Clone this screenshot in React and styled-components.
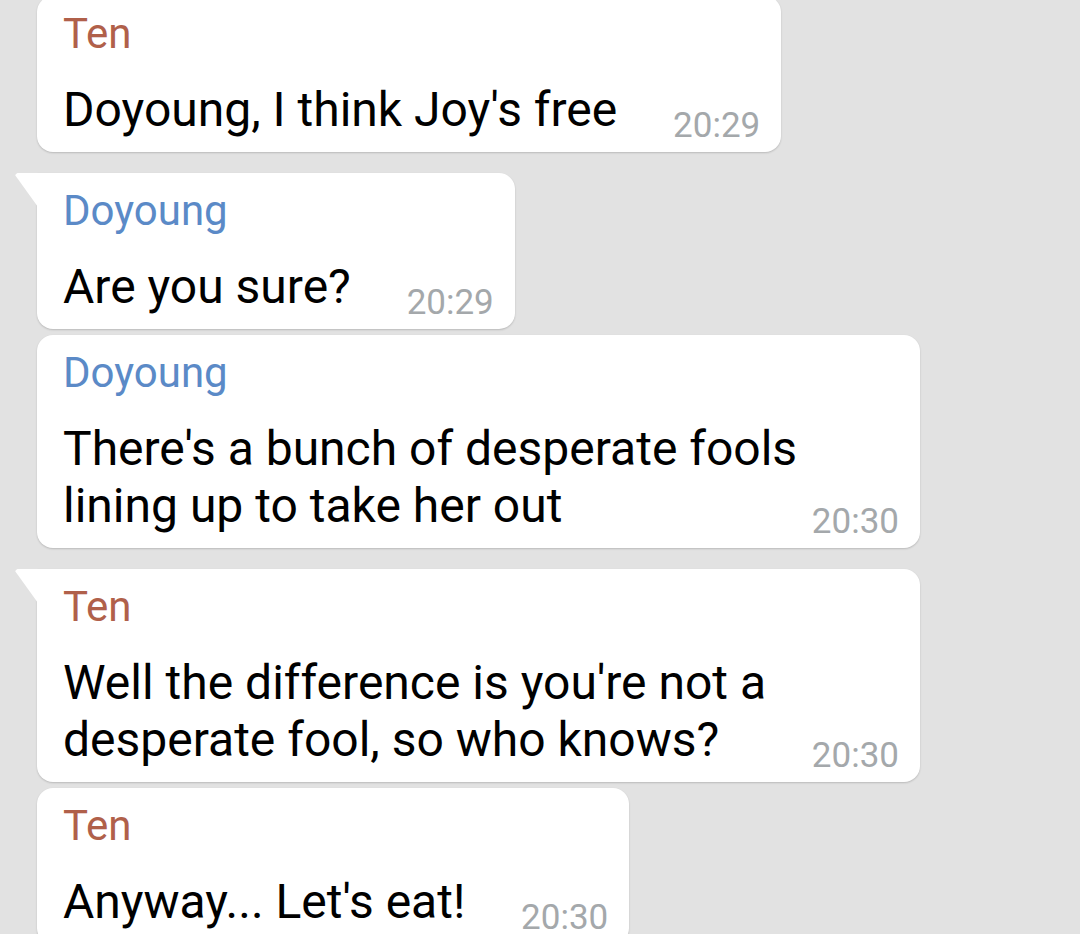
import React from 'react';
import styled, { createGlobalStyle, css } from 'styled-components';

const GlobalStyle = createGlobalStyle`
  html, body {
    margin: 0;
    padding: 0;
    background: #e2e2e2;
    font-family: Roboto, "Noto Sans", Arial, sans-serif;
    -webkit-font-smoothing: antialiased;
  }
`;

const messages = [
  { id: 1, from: 'Ten', text: "Doyoung, I think Joy's free", time: '20:29', first: false },
  { id: 2, from: 'Doyoung', text: 'Are you sure?', time: '20:29', first: true },
  { id: 3, from: 'Doyoung', text: "There's a bunch of desperate fools lining up to take her out", time: '20:30', first: false },
  { id: 4, from: 'Ten', text: "Well the difference is you're not a desperate fool, so who knows?", time: '20:30', first: true },
  { id: 5, from: 'Ten', text: "Anyway... Let's eat!", time: '20:30', first: false },
];

const nameColors = {
  Ten: '#b0604a',
  Doyoung: '#5b8ac7',
};

const App = () => {
  return (
    <React.Fragment>
      <GlobalStyle />
      <ChatList>
        {messages.map((m, i) => (
          <Bubble key={m.id} $tail={m.first} $gap={i === 0 ? -4 : m.first ? 21 : 6}>
            <Sender $color={nameColors[m.from]}>{m.from}</Sender>
            <Body>
              <Text>
                {m.text}
                <Spacer />
              </Text>
              <Time>{m.time}</Time>
            </Body>
          </Bubble>
        ))}
      </ChatList>
    </React.Fragment>
  );
};

export default App;

const ChatList = styled.div`
  width: 1080px;
  height: 934px;
  overflow: hidden;
  display: flex;
  flex-direction: column;
  align-items: flex-start;
  padding-left: 37px;
  box-sizing: border-box;
`;

const Bubble = styled.div`
  position: relative;
  max-width: 883px;
  box-sizing: border-box;
  margin-top: ${(p) => p.$gap}px;
  padding: 14px 21px 14px 26px;
  background: #fff;
  border-radius: 16px;
  box-shadow: 0 1px 2px rgba(0, 0, 0, 0.18);
  flex: none;

  ${(p) =>
    p.$tail &&
    css`
      border-top-left-radius: 0;
      &::before {
        content: '';
        position: absolute;
        top: 0;
        left: -22px;
        width: 23px;
        height: 34px;
        background: #fff;
        clip-path: polygon(2px 0, 100% 0, 100% 100%, 0 2px);
        border-top-left-radius: 3px;
      }
    `}
`;

const Sender = styled.div`
  font-size: 42px;
  line-height: 48px;
  color: ${(p) => p.$color};
  margin-bottom: 23px;
  white-space: nowrap;
`;

const Body = styled.div`
  display: grid;
  & > * {
    grid-area: 1 / 1;
  }
`;

const Text = styled.div`
  font-size: 48px;
  line-height: 57px;
  color: #000;
`;

const Spacer = styled.span`
  display: inline-block;
  width: 143px;
  height: 1px;
`;

const Time = styled.span`
  justify-self: end;
  align-self: end;
  font-size: 35px;
  line-height: 35px;
  color: #a4a8ab;
  margin-bottom: -5px;
`;
